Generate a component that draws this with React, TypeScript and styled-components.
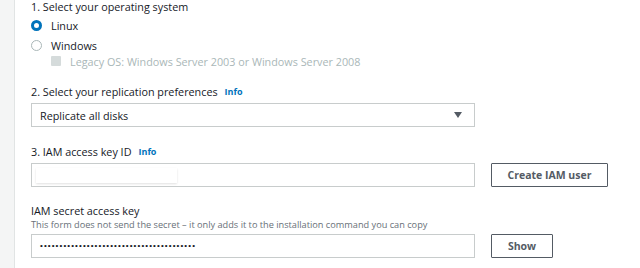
import styled, { createGlobalStyle } from "styled-components";

const GlobalStyle = createGlobalStyle`
  html, body {
    margin: 0;
    padding: 0;
    background: #ffffff;
  }
  body {
    font-family: "Open Sans", "Noto Sans", sans-serif;
    color: #16191f;
  }
`;

const Page = styled.div`
  display: flex;
  width: 640px;
  height: 268px;
  overflow: hidden;
`;

const SideStrip = styled.div`
  width: 14px;
  flex-shrink: 0;
  background: #f4f5f5;
  border-right: 1px solid #e1e4e4;
`;

const Content = styled.div`
  flex: 1;
  padding-left: 16px;
  display: flex;
  flex-direction: column;
`;

const Label = styled.div<{ $top?: number }>`
  margin-top: ${(p) => p.$top ?? 0}px;
  height: 14px;
  line-height: 14px;
  font-size: 10.8px;
  color: #16191f;
  display: flex;
  align-items: center;
  gap: 7px;
`;

const Info = styled.span`
  font-size: 9px;
  font-weight: 700;
  color: #0073bb;
`;

const Description = styled.div`
  height: 12px;
  line-height: 12px;
  font-size: 9.2px;
  color: #687078;
  margin-top: 1px;
  white-space: nowrap;
`;

const OptionRow = styled.label<{ $top: number; $indent?: number; $disabled?: boolean }>`
  margin-top: ${(p) => p.$top}px;
  margin-left: ${(p) => p.$indent ?? 0}px;
  height: 14px;
  display: flex;
  align-items: center;
  gap: 9px;
  font-size: 10.8px;
  color: ${(p) => (p.$disabled ? "#aab7b8" : "#16191f")};
`;

const Radio = styled.span<{ $checked?: boolean }>`
  box-sizing: border-box;
  width: 11px;
  height: 11px;
  border-radius: 50%;
  background: #ffffff;
  border: ${(p) => (p.$checked ? "3px solid #0073bb" : "1px solid #aab7b8")};
`;

const Checkbox = styled.span`
  width: 10px;
  height: 10px;
  border-radius: 1px;
  background: #d5dbdb;
`;

const Select = styled.div`
  box-sizing: border-box;
  margin-top: 4px;
  width: 444px;
  height: 24px;
  border: 1px solid #c8cccc;
  display: flex;
  align-items: center;
  justify-content: space-between;
  padding: 0 12px 0 8px;
  font-size: 10.8px;
`;

const Caret = styled.span`
  width: 0;
  height: 0;
  border-left: 4.5px solid transparent;
  border-right: 4.5px solid transparent;
  border-top: 6px solid #545b64;
`;

const FieldRow = styled.div<{ $top?: number }>`
  margin-top: ${(p) => p.$top ?? 4}px;
  display: flex;
  gap: 16px;
`;

const Input = styled.div`
  box-sizing: border-box;
  width: 444px;
  height: 24px;
  border: 1px solid #c8cccc;
  display: flex;
  align-items: center;
  padding: 0 4px;
`;

const Redacted = styled.span`
  width: 141px;
  height: 15px;
  background: #ffffff;
  box-shadow: 0 1px 2px rgba(0, 0, 0, 0.12);
`;

const Secret = styled.span`
  padding-left: 4px;
  font-size: 8px;
  letter-spacing: 1.1px;
  color: #16191f;
  line-height: 1;
  font-family: "Liberation Sans", sans-serif;
`;

const Button = styled.button<{ $width: number }>`
  box-sizing: border-box;
  width: ${(p) => p.$width}px;
  height: 24px;
  background: #ffffff;
  border: 1px solid #545b64;
  border-radius: 1px;
  font-family: "Open Sans", "Noto Sans", sans-serif;
  font-size: 10.5px;
  font-weight: 700;
  color: #545b64;
  padding: 0;
`;

export default function App() {
  return (
    <Page>
      <GlobalStyle />
      <SideStrip />
      <Content>
        <Label>1. Select your operating system</Label>
        <OptionRow $top={4}>
          <Radio $checked />
          Linux
        </OptionRow>
        <OptionRow $top={6}>
          <Radio />
          Windows
        </OptionRow>
        <OptionRow $top={2} $indent={20} $disabled>
          <Checkbox />
          Legacy OS: Windows Server 2003 or Windows Server 2008
        </OptionRow>

        <Label $top={17}>
          2. Select your replication preferences <Info>Info</Info>
        </Label>
        <Select>
          Replicate all disks
          <Caret />
        </Select>

        <Label $top={18}>
          3. IAM access key ID <Info>Info</Info>
        </Label>
        <FieldRow>
          <Input>
            <Redacted />
          </Input>
          <Button $width={117}>Create IAM user</Button>
        </FieldRow>

        <Label $top={17}>IAM secret access key</Label>
        <Description>
          This form does not send the secret – it only adds it to the installation command you can copy
        </Description>
        <FieldRow $top={3}>
          <Input>
            <Secret>{"•".repeat(40)}</Secret>
          </Input>
          <Button $width={62}>Show</Button>
        </FieldRow>
      </Content>
    </Page>
  );
}
